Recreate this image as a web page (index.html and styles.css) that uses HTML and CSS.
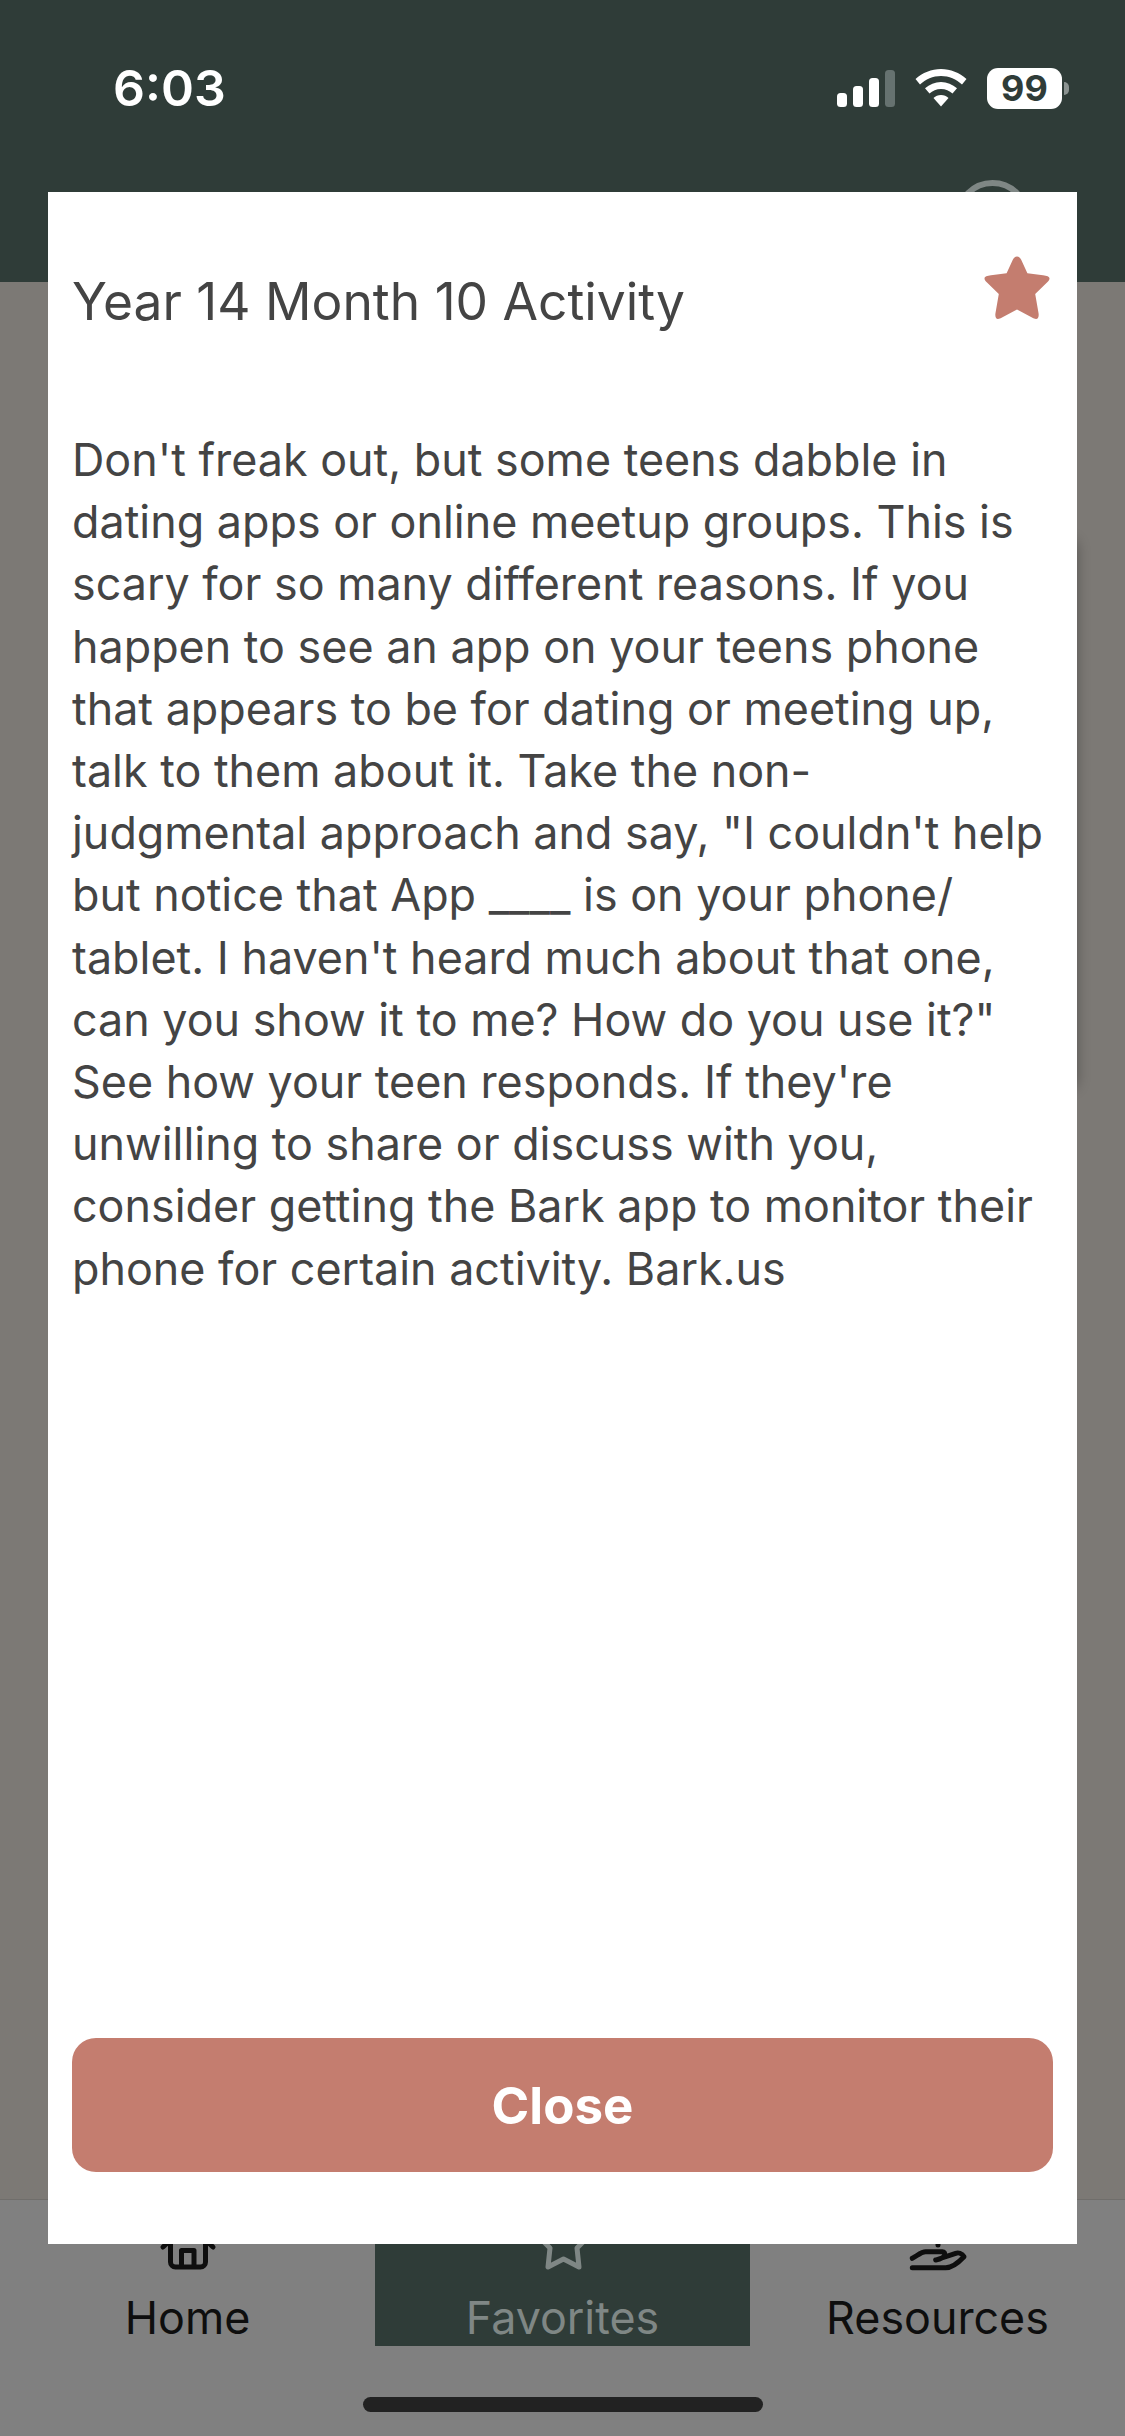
FILE: index.html
```html
<!DOCTYPE html>
<html lang="en">
<head>
<meta charset="utf-8">
<title>Year 14 Month 10 Activity</title>
<link rel="stylesheet" href="styles.css">
</head>
<body>
<div class="app">
  <header class="header">
    <div class="status">
      <span class="time">6:03</span>
      <div class="status-icons">
        <svg class="signal" width="58" height="37" viewBox="0 0 58 37"><rect x="0" y="23" width="10" height="14" rx="3.5" fill="#fff"/><rect x="16" y="16" width="10" height="21" rx="3.5" fill="#fff"/><rect x="32" y="8" width="10" height="29" rx="3.5" fill="#fff"/><rect x="48" y="0" width="10" height="37" rx="3.5" fill="#667270"/></svg>
        <svg class="wifi" width="52" height="38" viewBox="0 0 52 38"><path d="M26 0C35.500 0 44.500 3.800 51.500 10L47 15.500C41.500 10.300 34 7 26 7S10.500 10.300 5 15.500L.5 10C7.500 3.800 16.500 0 26 0Z" fill="#fff"/><path d="M26 13C32 13 37.500 15.300 42 19.300L37.500 24.500C34.500 21.800 30.500 20 26 20S17.500 21.800 14.500 24.500L10 19.300C14.500 15.300 20 13 26 13Z" fill="#fff"/><path d="M26 26C29 26 31.500 27.100 33.500 29L26 37.500L18.500 29C20.500 27.100 23 26 26 26Z" fill="#fff"/></svg>
        <div class="battery"><span class="battery-level">99</span><span class="battery-cap"></span></div>
      </div>
    </div>
    <div class="header-action"><svg width="75" height="75" viewBox="0 0 75 75"><circle cx="37.500" cy="37.500" r="34.500" fill="none" stroke="#7f8785" stroke-width="6"/></svg></div>
  </header>
  <main class="content"><div class="card"></div></main>
  <div class="bottom">
    <nav class="tabs">
      <div class="tab">
        <svg class="tab-icon" width="60" height="60" viewBox="0 0 60 60"><path d="M12.500 26V50A5 5 0 0 0 17.500 55H42.500A5 5 0 0 0 47.500 50V26M23.500 55V38.500H36V55M5 35L30 12L55 35" fill="none" stroke="#0e0e0e" stroke-width="5" stroke-linecap="round" stroke-linejoin="round"/></svg>
        <span class="tab-label">Home</span>
      </div>
      <div class="tab tab-active">
        <svg class="tab-icon" width="60" height="60" viewBox="0 0 60 60"><path d="M30.500 5L38.500 20L57 23L44 36L46 55L30.500 47L15 55L17 36L4 23L22.500 20Z" fill="none" stroke="#7f8785" stroke-width="5" stroke-linejoin="round"/></svg>
        <span class="tab-label">Favorites</span>
      </div>
      <div class="tab">
        <svg class="tab-icon" width="60" height="60" viewBox="0 0 60 60"><path d="M4.300 55.700H37.700C44 55.700 51 50 56 44.700C54 41 50 40.500 47.700 41.300L27.700 48M4.300 46.300C9 44 13 39.700 17.700 39.700H34.300C38 39.700 39 46 27.700 48M30 24V33" fill="none" stroke="#0e0e0e" stroke-width="5" stroke-linecap="round" stroke-linejoin="round"/></svg>
        <span class="tab-label">Resources</span>
      </div>
    </nav>
    <div class="home-bar"></div>
  </div>
</div>
<section class="modal">
  <div class="modal-head">
    <h1 class="modal-title">Year 14 Month 10 Activity</h1>
    <svg class="star" width="68" height="66" viewBox="0 0 68 66"><path d="M34 1.500C36 1.500 37.300 2.800 38.200 4.800L44.400 18.300L60 20.200C63.800 20.700 66.500 21.500 66.500 23.500C66.500 25 65.500 26 64 27.600L52.200 39L55.500 58C56 61 55.500 64 53 64C51.700 64 50.500 63.300 48.500 62.300L34 54.500L19.500 62.300C17.500 63.300 16.300 64 15 64C12.500 64 12 61 12.500 58L15.800 39L4 27.600C2.500 26 1.500 25 1.500 23.500C1.500 21.500 4.200 20.700 8 20.200L23.600 18.300L29.800 4.800C30.700 2.800 32 1.500 34 1.500Z" fill="#c47d6f"/></svg>
  </div>
  <p class="modal-body">Don't freak out, but some teens dabble in dating apps or online meetup groups. This is scary for so many different reasons. If you happen to see an app on your teens phone that appears to be for dating or meeting up, talk to them about it. Take the non-judgmental approach and say, "I couldn't help but notice that App ____ is on your phone/<wbr>tablet. I haven't heard much about that one, can you show it to me? How do you use it?" See how your teen responds. If they're unwilling to share or discuss with you, consider getting the Bark app to monitor their phone for certain activity. Bark.us</p>
  <button class="close-btn" type="button">Close</button>
</section>
</body>
</html>
```
FILE: styles.css
```css
* { box-sizing: border-box; }
html, body { margin: 0; padding: 0; }
body {
  width: 1125px;
  height: 2436px;
  position: relative;
  overflow: hidden;
  font-family: Inter, "Liberation Sans", sans-serif;
  background: #7c7975;
}
.app {
  height: 2436px;
  display: flex;
  flex-direction: column;
}
.header {
  height: 282px;
  flex: none;
  background: #2f3c38;
  padding: 56px 56px 0 113px;
  position: relative;
}
.status {
  display: flex;
  justify-content: space-between;
  align-items: center;
  height: 64px;
}
.time {
  color: #fff;
  font-size: 50px;
  font-weight: 600;
}
.status-icons {
  display: flex;
  align-items: center;
  gap: 20px;
}
.signal, .wifi { display: block; }
.battery {
  display: flex;
  align-items: center;
  gap: 2px;
}
.battery-level {
  width: 75px;
  height: 41px;
  border-radius: 11px;
  background: #fff;
  color: #2f3c38;
  font-size: 36px;
  font-weight: 700;
  line-height: 41px;
  text-align: center;
}
.battery-cap {
  width: 5px;
  height: 13px;
  border-radius: 0 6px 6px 0;
  background: #8b9391;
}
.header-action {
  position: absolute;
  left: 955px;
  top: 180px;
}
.header-action svg { display: block; }
.content {
  flex: 1;
  padding: 258px 48px 0 100px;
}
.card {
  height: 548px;
  border-radius: 8px;
  box-shadow: 0 0 14px rgba(0, 0, 0, .3);
}
.bottom {
  flex: none;
  height: 237px;
  background: #808080;
  border-top: 1px solid #706e6b;
}
.tabs {
  height: 146px;
  display: flex;
}
.tab {
  flex: 1;
  display: flex;
  flex-direction: column;
  align-items: center;
  justify-content: flex-end;
  gap: 21px;
  color: #0e0e0e;
  font-size: 44.800px;
  padding-bottom: 2px;
}
.tab-active {
  background: #2f3c38;
  color: #7f8785;
}
.tab-label { line-height: 51px; }
.tab-icon { display: block; }
.home-bar {
  width: 400px;
  height: 15px;
  margin: 51px auto 0;
  border-radius: 8px;
  background: #222;
}
.modal {
  position: absolute;
  left: 48px;
  top: 192px;
  width: 1029px;
  height: 2052px;
  background: #fff;
  padding: 60px 24px 72px;
  display: flex;
  flex-direction: column;
  color: #444;
}
.modal-head {
  display: flex;
  justify-content: space-between;
  align-items: flex-start;
}
.modal-title {
  margin: 0;
  padding-top: 18px;
  font-size: 51.500px;
  font-weight: 400;
  line-height: 62px;
}
.star {
  display: block;
  margin: 2.500px 2.500px 0 0;
}
.modal-body {
  margin: 97px 8px 0 0;
  flex: 1;
  font-size: 44.850px;
  line-height: 62.200px;
}
.close-btn {
  display: block;
  height: 134px;
  width: 100%;
  border: 0;
  border-radius: 24px;
  background: #c47d6f;
  color: #fff;
  font: 700 51px Inter, sans-serif;
}
```
